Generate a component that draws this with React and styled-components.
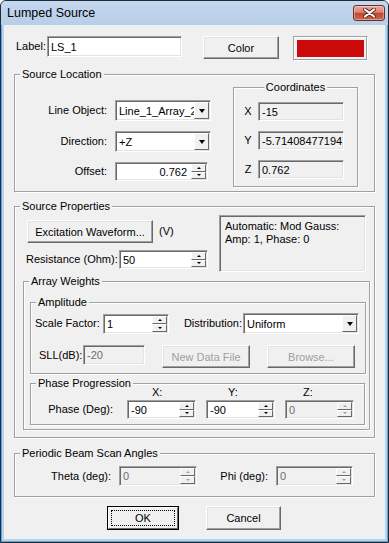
import React from "react";
import styled, { createGlobalStyle } from "styled-components";

const GlobalStyle = createGlobalStyle`
  html, body {
    margin: 0;
    padding: 0;
    background: #ffffff;
  }
  body {
    font-family: Tahoma, "Liberation Sans", Arial, sans-serif;
    font-size: 11px;
    color: #000;
  }
  * {
    box-sizing: border-box;
  }
`;

const Window = styled.div`
  width: 389px;
  height: 543px;
  border: 1px solid #1d2b3b;
  border-radius: 6px 6px 0 0;
  background: #bcd3ec;
  box-shadow: inset 1px 0 0 #5aa6e0, inset -1px 0 0 #5aa6e0, inset 0 -1px 0 #5aa6e0;
  display: flex;
  flex-direction: column;
  overflow: hidden;
`;

const TitleBar = styled.div`
  height: 24px;
  flex: none;
  display: flex;
  align-items: flex-start;
  padding: 0 3px 0 6px;
  background: linear-gradient(#c4d8ee, #b7cee8);
`;

const TitleText = styled.span`
  font-family: "Segoe UI", "Liberation Sans", Arial, sans-serif;
  font-size: 12.5px;
  line-height: 24px;
  color: #000;
`;

const CloseButton = styled.div`
  margin: 4px 0 0 auto;
  width: 32px;
  height: 16px;
  border: 1px solid #6e2f28;
  border-radius: 3px;
  background: linear-gradient(#e8a99d 0%, #d88473 45%, #c3452f 52%, #cf6a50 100%);
  box-shadow: inset 0 0 0 1px rgba(255, 255, 255, 0.35);
  display: flex;
  align-items: center;
  justify-content: center;
`;

const Client = styled.div`
  flex: 1;
  margin: 0 3px 3px 3px;
  background: #f0f0f0;
  padding-left: 10px;
  display: flex;
  flex-direction: column;
`;

const Row = styled.div`
  display: flex;
  align-items: ${(p) => p.$align || "center"};
  margin: ${(p) => p.$m || 0};
`;

const Column = styled.div`
  display: flex;
  flex-direction: column;
  width: ${(p) => p.$w}px;
  margin: ${(p) => p.$m || 0};
`;

const Text = styled.span`
  flex: none;
  width: ${(p) => (p.$w ? `${p.$w}px` : "auto")};
  line-height: ${(p) => p.$lh || 19}px;
  text-align: ${(p) => p.$align || "left"};
  padding: ${(p) => p.$pad || 0};
  color: ${(p) => (p.$disabled ? "#a0a0a0" : "#000")};
  white-space: nowrap;
`;

const FormGrid = styled.div`
  display: grid;
  grid-template-columns: ${(p) => p.$cols};
  grid-auto-rows: ${(p) => p.$rows || "auto"};
  gap: ${(p) => p.$gap};
  align-items: center;
  margin: ${(p) => p.$m || 0};
`;

const Group = styled.div`
  position: relative;
  flex: none;
  width: ${(p) => p.$w}px;
  height: ${(p) => p.$h}px;
  margin: ${(p) => p.$m || 0};
  border: 1px solid #a0a0a0;
  box-shadow: inset 1px 1px 0 #fff, 1px 1px 0 #fff;
`;

const GroupTitle = styled.span`
  position: absolute;
  top: -8px;
  left: ${(p) => (p.$center ? "50%" : "5px")};
  transform: ${(p) => (p.$center ? "translateX(-50%)" : "none")};
  padding: 0 2px;
  line-height: 14px;
  background: #f0f0f0;
  white-space: nowrap;
`;

const Edit = styled.div`
  flex: none;
  width: ${(p) => p.$w}px;
  height: ${(p) => p.$h || 19}px;
  background: ${(p) => (p.$gray ? "#f0f0f0" : "#fff")};
  border: 1px solid;
  border-color: #a0a0a0 #fff #fff #a0a0a0;
  box-shadow: inset 1px 1px 0 #696969, inset -1px -1px 0 #e3e3e3;
  display: flex;
  align-items: stretch;
  overflow: hidden;
  color: ${(p) => (p.$disabled ? "#6d6d6d" : "#000")};
`;

const EditText = styled.span`
  flex: 1;
  min-width: 0;
  display: flex;
  align-items: center;
  justify-content: ${(p) => (p.$right ? "flex-end" : "flex-start")};
  padding: ${(p) => (p.$right ? "0 4px 0 3px" : "0 2px 0 3px")};
  white-space: nowrap;
  overflow: hidden;
`;

const SideButtons = styled.div`
  flex: none;
  width: 16px;
  padding: 1px 1px 1px 0;
  display: flex;
  flex-direction: column;
`;

const RaisedPart = styled.div`
  flex: 1;
  background: #f0f0f0;
  border: 1px solid;
  border-color: #fff #696969 #696969 #fff;
  display: flex;
  align-items: center;
  justify-content: center;
`;

const Arrow = styled.span`
  width: 0;
  height: 0;
  border-left: ${(p) => p.$size}px solid transparent;
  border-right: ${(p) => p.$size}px solid transparent;
  border-top: ${(p) => (p.$up ? "0" : `${p.$tall}px solid ${p.$color}`)};
  border-bottom: ${(p) => (p.$up ? `${p.$tall}px solid ${p.$color}` : "0")};
`;

const Button = styled.div`
  flex: none;
  width: ${(p) => p.$w}px;
  height: ${(p) => p.$h || 23}px;
  margin: ${(p) => p.$m || 0};
  background: #f0f0f0;
  border: 1px solid;
  border-color: #fff #696969 #696969 #fff;
  box-shadow: inset -1px -1px 0 #a0a0a0, inset 1px 1px 0 #e3e3e3;
  display: flex;
  align-items: center;
  justify-content: center;
  color: ${(p) => (p.$disabled ? "#a0a0a0" : "#000")};
  white-space: nowrap;
`;

const DefaultButton = styled.div`
  flex: none;
  width: ${(p) => p.$w}px;
  height: ${(p) => p.$h}px;
  border: 1px solid #000;
  display: flex;
`;

const DefaultFace = styled.div`
  flex: 1;
  background: #f0f0f0;
  border: 1px solid;
  border-color: #fff #696969 #696969 #fff;
  padding: 2px;
  display: flex;
`;

const FocusRing = styled.div`
  flex: 1;
  border: 1px dotted #000;
  display: flex;
  align-items: center;
  justify-content: center;
`;

const Swatch = styled.div`
  flex: none;
  width: 75px;
  height: 25px;
  margin-left: 14px;
  border: 1px solid;
  border-color: #a0a0a0 #fff #fff #a0a0a0;
  box-shadow: inset -1px -1px 0 #a0a0a0, inset 1px 1px 0 #fff;
  padding: 3px;
  display: flex;
`;

const SwatchFill = styled.div`
  flex: 1;
  background: #cc0a0a;
`;

const InfoBox = styled.div`
  flex: none;
  width: 147px;
  height: 57px;
  margin: 8px 0 0 11px;
  border: 1px solid;
  border-color: #a0a0a0 #fff #fff #a0a0a0;
  box-shadow: inset 1px 1px 0 #696969, inset -1px -1px 0 #e3e3e3;
  padding: 4px 4px 0 5px;
  line-height: 13px;
`;

const PhaseGrid = styled.div`
  display: grid;
  grid-template-columns: 86px 69px 69px 69px;
  grid-template-rows: 13px 19px;
  column-gap: 10px;
  row-gap: 1px;
  align-items: center;
  padding-top: 2px;
`;

const Head = styled.span`
  padding-left: ${(p) => p.$indent}px;
  line-height: 13px;
  color: ${(p) => (p.$disabled ? "#6d6d6d" : "#000")};
`;

function SpinEdit({ w, h = 19, value, right, disabled }) {
  const c = disabled ? "#a0a0a0" : "#000";
  return (
    <Edit $w={w} $h={h} $gray={disabled} $disabled={disabled}>
      <EditText $right={right}>{value}</EditText>
      <SideButtons>
        <RaisedPart>
          <Arrow $up $size={2} $tall={2} $color={c} />
        </RaisedPart>
        <RaisedPart>
          <Arrow $size={2} $tall={2} $color={c} />
        </RaisedPart>
      </SideButtons>
    </Edit>
  );
}

function ComboBox({ w, h = 21, value }) {
  return (
    <Edit $w={w} $h={h}>
      <EditText>{value}</EditText>
      <SideButtons>
        <RaisedPart>
          <Arrow $size={3.5} $tall={4} $color="#000" />
        </RaisedPart>
      </SideButtons>
    </Edit>
  );
}

function CloseIcon() {
  return (
    <svg width="13" height="10" viewBox="0 0 13 10">
      <path
        d="M2 1.5 L11 8.5 M11 1.5 L2 8.5"
        stroke="#5a2a24"
        strokeWidth="4"
        strokeLinecap="round"
        fill="none"
      />
      <path d="M2 1.5 L11 8.5 M11 1.5 L2 8.5" stroke="#fff" strokeWidth="2.2" strokeLinecap="round" fill="none" />
    </svg>
  );
}

export default function App() {
  return (
    <>
      <GlobalStyle />
      <Window>
        <TitleBar>
          <TitleText>Lumped Source</TitleText>
          <CloseButton>
            <CloseIcon />
          </CloseButton>
        </TitleBar>
        <Client>
          <Row $align="flex-start" $m="11px 0 0 2px">
            <Text $w={31} $lh={21}>
              Label:
            </Text>
            <Edit $w={135} $h={21}>
              <EditText>LS_1</EditText>
            </Edit>
            <Button $w={76} $m="0 0 0 21px">
              Color
            </Button>
            <Swatch>
              <SwatchFill />
            </Swatch>
          </Row>

          <Group $w={361} $h={118} $m="13px 0 0 0">
            <GroupTitle>Source Location</GroupTitle>
            <Row $align="flex-start">
              <FormGrid $cols="92px 96px" $gap="10px 8px" $m="25px 0 0 0">
                <Text $align="right">Line Object:</Text>
                <ComboBox w={96} value="Line_1_Array_2" />
                <Text $align="right">Direction:</Text>
                <ComboBox w={96} value="+Z" />
                <Text $align="right">Offset:</Text>
                <SpinEdit w={93} h={19} value="0.762" right />
              </FormGrid>
              <Group $w={125} $h={100} $m="12px 0 0 22px">
                <GroupTitle $center>Coordinates</GroupTitle>
                <FormGrid $cols="10px 86px" $rows="19px" $gap="10px 5px" $m="14px 0 0 9px">
                  <Text $align="center">X</Text>
                  <Edit $w={86} $gray>
                    <EditText>-15</EditText>
                  </Edit>
                  <Text $align="center">Y</Text>
                  <Edit $w={86} $gray>
                    <EditText>-5.71408477194</EditText>
                  </Edit>
                  <Text $align="center">Z</Text>
                  <Edit $w={86} $gray>
                    <EditText>0.762</EditText>
                  </Edit>
                </FormGrid>
              </Group>
            </Row>
          </Group>

          <Group $w={361} $h={232} $m="14px 0 0 0">
            <GroupTitle>Source Properties</GroupTitle>
            <Row $align="flex-start">
              <Column $w={182} $m="13px 0 0 11px">
                <Row $m="0 0 0 1px">
                  <Button $w={126}>Excitation Waveform...</Button>
                  <Text $pad="0 0 0 6px">(V)</Text>
                </Row>
                <Row $m="7px 0 0 0">
                  <Text $w={93}>Resistance (Ohm):</Text>
                  <SpinEdit w={89} value="50" />
                </Row>
              </Column>
              <InfoBox>
                Automatic: Mod Gauss:
                <br />
                Amp: 1, Phase: 0
              </InfoBox>
            </Row>

            <Group $w={347} $h={149} $m="9px 0 0 8px">
              <GroupTitle>Array Weights</GroupTitle>
              <Group $w={336} $h={72} $m="20px 0 0 6px">
                <GroupTitle>Amplitude</GroupTitle>
                <Row $m="10px 0 0 4px">
                  <Text $w={68}>Scale Factor:</Text>
                  <SpinEdit w={66} h={20} value="1" />
                  <Text $w={74} $align="right" $pad="0 1px 0 0">
                    Distribution:
                  </Text>
                  <ComboBox w={116} value="Uniform" />
                </Row>
                <Row $align="flex-start" $m="11px 0 0 8px">
                  <Text $w={44} $lh={20}>
                    SLL(dB):
                  </Text>
                  <Edit $w={62} $h={20} $gray $disabled>
                    <EditText>-20</EditText>
                  </Edit>
                  <Button $w={88} $m="0 0 0 17px" $disabled>
                    New Data File
                  </Button>
                  <Button $w={88} $m="0 0 0 17px" $disabled>
                    Browse...
                  </Button>
                </Row>
              </Group>

              <Group $w={335} $h={42} $m="9px 0 0 6px">
                <GroupTitle>Phase Progression</GroupTitle>
                <PhaseGrid>
                  <span />
                  <Head $indent={25}>X:</Head>
                  <Head $indent={22}>Y:</Head>
                  <Head $indent={18}>Z:</Head>
                  <Text $align="right" $pad="0 4px 0 0">
                    Phase (Deg):
                  </Text>
                  <SpinEdit w={69} value="-90" />
                  <SpinEdit w={69} value="-90" />
                  <SpinEdit w={69} value="0" disabled />
                </PhaseGrid>
              </Group>
            </Group>
          </Group>

          <Group $w={361} $h={44} $m="15px 0 0 0">
            <GroupTitle>Periodic Beam Scan Angles</GroupTitle>
            <Row $m="12px 0 0 0">
              <Text $w={104} $align="right" $pad="0 8px 0 0">
                Theta (deg):
              </Text>
              <SpinEdit w={78} h={20} value="0" disabled />
              <Text $w={79} $align="right" $pad="0 8px 0 0">
                Phi (deg):
              </Text>
              <SpinEdit w={77} h={20} value="0" disabled />
            </Row>
          </Group>

          <Row $m="9px 0 0 93px">
            <DefaultButton $w={72} $h={24}>
              <DefaultFace>
                <FocusRing>OK</FocusRing>
              </DefaultFace>
            </DefaultButton>
            <Button $w={75} $h={24} $m="0 0 0 27px">
              Cancel
            </Button>
          </Row>
        </Client>
      </Window>
    </>
  );
}
